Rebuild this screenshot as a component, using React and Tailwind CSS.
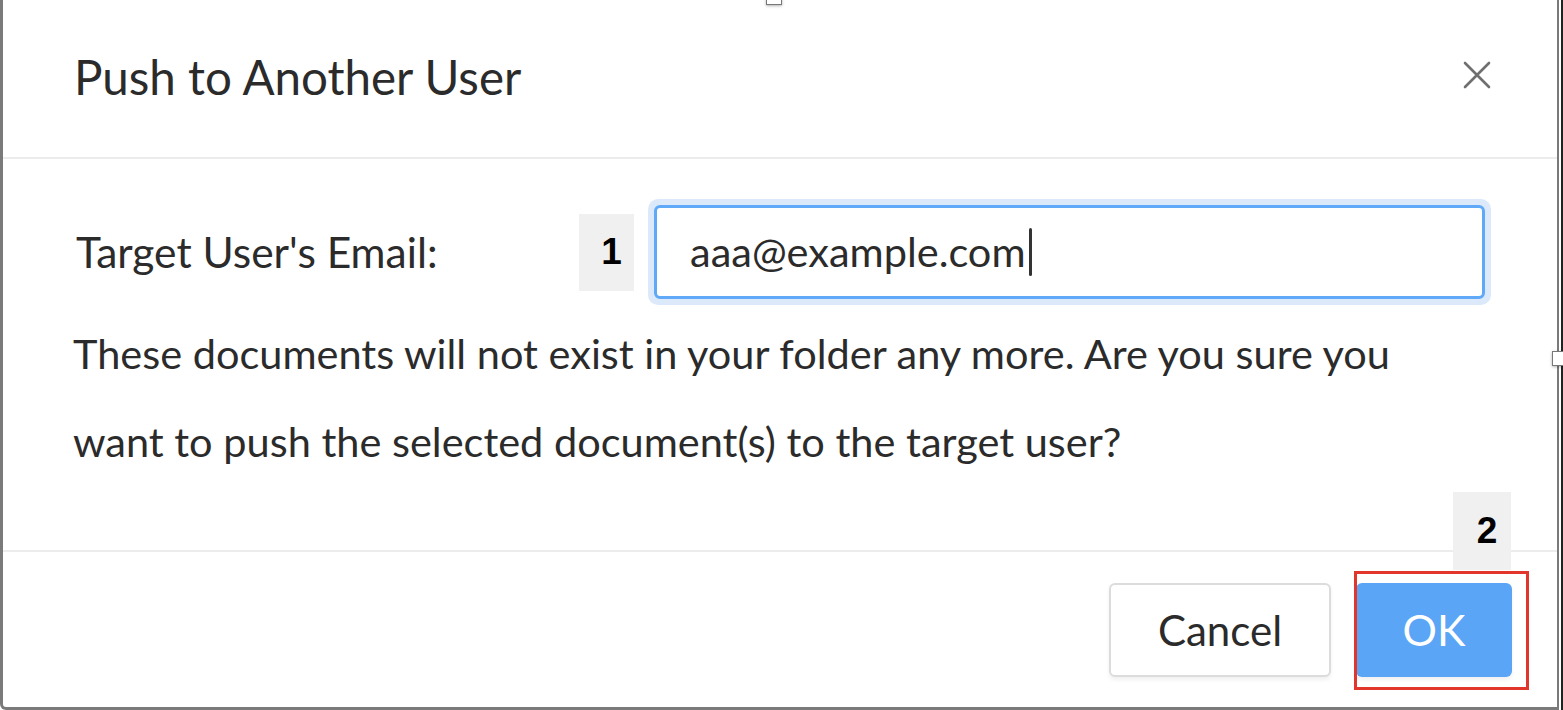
export default function App() {
  const lato = { fontFamily: 'Lato, "Open Sans", sans-serif' };
  return (
    <div className="relative w-[1563px] h-[710px] flex bg-white overflow-hidden" style={lato}>
      <div className="flex-1 h-full flex flex-col border-l-[3px] border-r-[2px] border-b-[3px] border-[#7a7a7a] rounded-bl-[6px] bg-white">
        {/* Header */}
        <div className="h-[157px] flex items-center justify-between pl-[71px] pr-[66px]">
          <h1 className="text-[47.5px] text-[#2b2b2b] leading-none mt-[-4px]">Push to Another User</h1>
          <svg width="28" height="28" viewBox="0 0 28 28" className="mt-[-8px]">
            <path d="M2 2 L26 26 M26 2 L2 26" stroke="#6f6f6f" strokeWidth="2.6" strokeLinecap="round" />
          </svg>
        </div>
        <div className="h-[2px] bg-[#ececec]" />
        {/* Body */}
        <div className="h-[391px] flex flex-col">
          <div className="flex items-center pl-[73px] mt-[40px]">
            <div className="w-[503px] text-[42.5px] text-[#2b2b2b] leading-none">Target User's Email:</div>
            <div
              className="w-[55px] h-[77px] bg-[#f0f0f0] flex items-center justify-center pl-[10px] text-[37px] font-bold text-black"
              style={{ fontFamily: '"Liberation Sans", Arial, sans-serif' }}
            >
              1
            </div>
            <div className="ml-[14px] w-[843px] h-[106px] rounded-[10px] bg-[#dce9fb] p-[6px]">
              <div className="w-full h-full rounded-[6px] border-[3px] border-[#60a9f8] bg-white flex items-center pl-[33px]">
                <span className="text-[41.5px] text-[#2b2b2b] leading-none">aaa@example.com</span>
                <span className="ml-[3px] w-[3px] h-[48px] bg-[#333] rounded-sm" />
              </div>
            </div>
          </div>
          <p className="pl-[70px] pr-[60px] mt-[4px] text-[41.5px] leading-[88px] text-[#2b2b2b] whitespace-nowrap">
            These documents will not exist in your folder any more. Are you sure you
            <br />
            want to push the selected document(s) to the target user?
          </p>
        </div>
        <div className="h-[2px] bg-[#ececec]" />
        {/* Footer */}
        <div className="flex-1 flex items-start justify-end pt-[31px] pr-[45px] gap-[25px]">
          <button className="w-[222px] h-[94px] rounded-[6px] border-[2px] border-[#dcdcdc] bg-white text-[42px] text-[#2b2b2b] shadow-[0_3px_4px_rgba(0,0,0,0.06)]">
            Cancel
          </button>
          <button className="w-[156px] h-[94px] rounded-[6px] bg-[#5aa5f6] text-[43px] text-white shadow-[0_3px_4px_rgba(0,0,0,0.06)]">
            OK
          </button>
        </div>
      </div>
      <div className="w-[2px] h-full bg-white" />
      <div className="w-[2px] h-full bg-[#222]" />

      {/* Overlays */}
      <div className="absolute left-[766px] top-[-2px] w-[16px] h-[7px] border border-[#777] bg-white shadow-[0_1px_3px_rgba(0,0,0,0.3)]" />
      <div className="absolute left-[1552px] top-[351px] w-[12px] h-[15px] border border-[#777] bg-white shadow-[0_1px_3px_rgba(0,0,0,0.3)]" />
      <div
        className="absolute left-[1453px] top-[492px] w-[58px] h-[78px] bg-[#f0f0f0] flex items-center justify-center pl-[10px] text-[37px] font-bold text-black"
        style={{ fontFamily: '"Liberation Sans", Arial, sans-serif' }}
      >
        2
      </div>
      <div className="absolute left-[1354px] top-[571px] w-[175px] h-[119px] border-[3px] border-[#e2362c]" />
    </div>
  );
}
